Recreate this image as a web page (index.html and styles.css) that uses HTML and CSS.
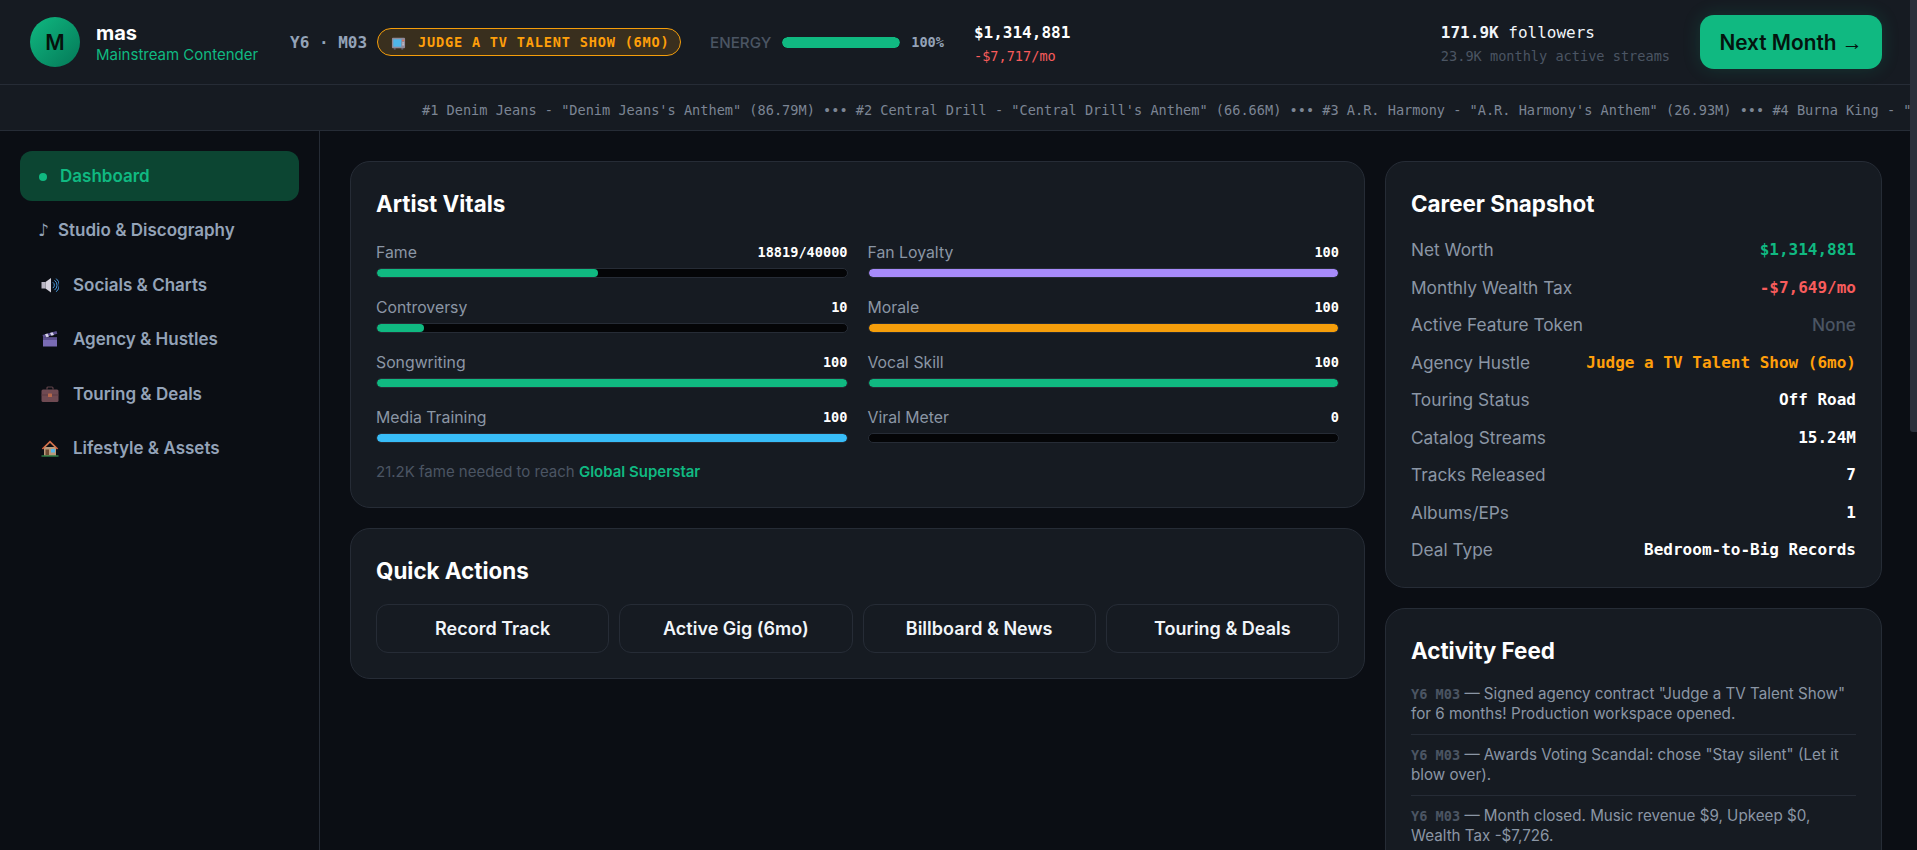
FILE: index.html
```html
<!DOCTYPE html>
<html lang="en">
<head>
<meta charset="utf-8">
<title>mas - Dashboard</title>
<link rel="stylesheet" href="styles.css">
</head>
<body>
<div class="shell">
  <header class="topbar">
    <div class="avatar">M</div>
    <div class="identity">
      <div class="name">mas</div>
      <div class="rank">Mainstream Contender</div>
    </div>
    <div class="date">Y6 · M03</div>
    <div class="gig-badge">
      <svg class="gig-icon" viewBox="0 0 16 16" aria-hidden="true"><rect x="1" y="3" width="14" height="11" rx="1" fill="#8f8a99"/><rect x="2.5" y="4.5" width="8.5" height="8" fill="#4fb6e8"/><rect x="12" y="5" width="2" height="1.5" fill="#e0705a"/><rect x="12" y="8" width="2" height="1" fill="#d9d4de"/><rect x="12" y="10" width="2" height="1" fill="#d9d4de"/><rect x="3" y="14" width="2" height="1.5" fill="#6b6675"/><rect x="11" y="14" width="2" height="1.5" fill="#6b6675"/></svg>
      JUDGE A TV TALENT SHOW (6MO)
    </div>
    <div class="energy">
      <span class="energy-label">ENERGY</span>
      <span class="energy-track"><span class="energy-fill"></span></span>
      <span class="energy-pct">100%</span>
    </div>
    <div class="money">
      <div class="money-val">$1,314,881</div>
      <div class="money-rate">-$7,717/mo</div>
    </div>
    <div class="reach">
      <div class="followers"><b>171.9K</b> followers</div>
      <div class="streams">23.9K monthly active streams</div>
    </div>
    <button class="next-btn">Next Month <span class="arrow">→</span></button>
  </header>
  <div class="ticker"><div class="ticker-text">#1 Denim Jeans - "Denim Jeans's Anthem" (86.79M) ••• #2 Central Drill - "Central Drill's Anthem" (66.66M) ••• #3 A.R. Harmony - "A.R. Harmony's Anthem" (26.93M) ••• #4 Burna King - "Burna King's Anthem" (21.40M)</div></div>
  <div class="layout">
    <nav class="sidebar">
      <a class="nav-item active"><span class="nav-dot"></span>Dashboard</a>
      <a class="nav-item"><span class="nav-glyph">♪</span>Studio &amp; Discography</a>
      <a class="nav-item">
        <svg class="nav-icon" viewBox="0 0 18 18" aria-hidden="true"><rect x="0.5" y="6" width="4" height="6.5" fill="#b9b6c4"/><path d="M4.5 6 10 2v14.5L4.5 12.500z" fill="#d6d3de"/><path d="M11.800 6.300a3.500 3.500 0 0 1 0 5.800M13.500 4.300a6 6 0 0 1 0 9.800M15.200 2.600a8.500 8.500 0 0 1 0 13.200" fill="none" stroke="#4a9be0" stroke-width="1"/></svg>
        Socials &amp; Charts
      </a>
      <a class="nav-item">
        <svg class="nav-icon" viewBox="0 0 18 18" aria-hidden="true"><rect x="2" y="7.500" width="14" height="9" fill="#7a6cb5"/><rect x="2" y="7.500" width="14" height="2.500" fill="#5c4f8f"/><path d="M1.500 5 15.500 1l.8 2.800-14 4z" fill="#5c4f8f"/><path d="M4 4.300 6.500 3.600 8 6.500 5.500 7.200zM9 2.900 11.500 2.200 13 5.100 10.500 5.800z" fill="#d8d4ea"/></svg>
        Agency &amp; Hustles
      </a>
      <a class="nav-item">
        <svg class="nav-icon" viewBox="0 0 18 18" aria-hidden="true"><path d="M6 4.500V3a1 1 0 0 1 1-1h4a1 1 0 0 1 1 1v1.500" fill="none" stroke="#5f4248" stroke-width="1.200"/><rect x="0.500" y="4.500" width="17" height="12.500" rx="1.500" fill="#6f4a52"/><rect x="0.500" y="9.500" width="17" height="1" fill="#5a3b42"/><rect x="7" y="8.500" width="4" height="3.500" rx="0.500" fill="#b5684a"/></svg>
        Touring &amp; Deals
      </a>
      <a class="nav-item">
        <svg class="nav-icon" viewBox="0 0 18 18" aria-hidden="true"><rect x="3" y="8" width="12" height="8.500" fill="#b99a7c"/><path d="M9 1.500 0.800 9.500l1.200 1L9 3.800l7 6.700 1.200-1z" fill="#d9603f"/><path d="M9 3.800 3 9.500V8l6-5.500 6 5.500v1.500z" fill="#c97c52"/><rect x="4.500" y="10.500" width="3.500" height="6" fill="#6e4a34"/><rect x="10" y="10" width="4" height="3.500" fill="#55b6e8"/><rect x="0.500" y="16.500" width="17" height="1" fill="#3fae5a"/></svg>
        Lifestyle &amp; Assets
      </a>
    </nav>
    <main class="main">
      <div class="col">
        <section class="card">
          <h2 class="card-title">Artist Vitals</h2>
          <div class="vitals">
            <div class="vital"><div class="vital-head"><span>Fame</span><b>18819/40000</b></div><div class="bar"><div class="fill green" style="width:47.05%"></div></div></div>
            <div class="vital"><div class="vital-head"><span>Fan Loyalty</span><b>100</b></div><div class="bar"><div class="fill purple" style="width:100%"></div></div></div>
            <div class="vital"><div class="vital-head"><span>Controversy</span><b>10</b></div><div class="bar"><div class="fill green" style="width:10%"></div></div></div>
            <div class="vital"><div class="vital-head"><span>Morale</span><b>100</b></div><div class="bar"><div class="fill amber" style="width:100%"></div></div></div>
            <div class="vital"><div class="vital-head"><span>Songwriting</span><b>100</b></div><div class="bar"><div class="fill green" style="width:100%"></div></div></div>
            <div class="vital"><div class="vital-head"><span>Vocal Skill</span><b>100</b></div><div class="bar"><div class="fill green" style="width:100%"></div></div></div>
            <div class="vital"><div class="vital-head"><span>Media Training</span><b>100</b></div><div class="bar"><div class="fill blue" style="width:100%"></div></div></div>
            <div class="vital"><div class="vital-head"><span>Viral Meter</span><b>0</b></div><div class="bar"><div class="fill green" style="width:0%"></div></div></div>
          </div>
          <p class="fame-note">21.2K fame needed to reach <b>Global Superstar</b></p>
        </section>
        <section class="card">
          <h2 class="card-title">Quick Actions</h2>
          <div class="actions">
            <button class="action">Record Track</button>
            <button class="action">Active Gig (6mo)</button>
            <button class="action">Billboard &amp; News</button>
            <button class="action">Touring &amp; Deals</button>
          </div>
        </section>
      </div>
      <div class="col">
        <section class="card snapshot">
          <h2 class="card-title">Career Snapshot</h2>
          <div class="stat"><span>Net Worth</span><b class="c-green">$1,314,881</b></div>
          <div class="stat"><span>Monthly Wealth Tax</span><b class="c-red">-$7,649/mo</b></div>
          <div class="stat"><span>Active Feature Token</span><em class="c-none">None</em></div>
          <div class="stat"><span>Agency Hustle</span><b class="c-amber">Judge a TV Talent Show (6mo)</b></div>
          <div class="stat"><span>Touring Status</span><b>Off Road</b></div>
          <div class="stat"><span>Catalog Streams</span><b>15.24M</b></div>
          <div class="stat"><span>Tracks Released</span><b>7</b></div>
          <div class="stat"><span>Albums/EPs</span><b>1</b></div>
          <div class="stat"><span>Deal Type</span><b>Bedroom-to-Big Records</b></div>
        </section>
        <section class="card feed">
          <h2 class="card-title">Activity Feed</h2>
          <div class="feed-item"><span class="stamp">Y6 M03</span> — Signed agency contract "Judge a TV Talent Show" for 6 months! Production workspace opened.</div>
          <div class="feed-item"><span class="stamp">Y6 M03</span> — Awards Voting Scandal: chose "Stay silent" (Let it blow over).</div>
          <div class="feed-item"><span class="stamp">Y6 M03</span> — Month closed. Music revenue $9, Upkeep $0, Wealth Tax -$7,726.</div>
        </section>
      </div>
    </main>
  </div>
</div>
<div class="rail"><div class="rail-thumb"></div></div>
</body>
</html>
```
FILE: styles.css
```css
* { box-sizing: border-box; }
html, body { margin: 0; height: 100%; overflow: hidden; }
body { display: flex; background: #0b0e14; color: #f1f5f9; font-family: Inter, "Noto Sans", sans-serif; }

.shell { flex: 1; min-width: 0; height: 100vh; overflow: hidden; }
.rail { flex: none; width: 7px; height: 100vh; background: #0b0e14; }
.rail-thumb { height: 432px; background: #2a303b; border-radius: 0 0 0 3px; }

/* Top bar */
.topbar { height: 85px; display: flex; align-items: center; padding: 0 28px 0 30px; background: #161b22; border-bottom: 1px solid #262c36; }
.avatar { flex: none; width: 50px; height: 50px; border-radius: 50%; display: flex; align-items: center; justify-content: center; background: linear-gradient(135deg, #10b981, #047857); color: #06120d; font-size: 21px; font-weight: 600; }
.identity { margin-left: 16px; width: 194px; padding-top: 2px; }
.name { font-size: 20px; font-weight: 700; line-height: 24px; color: #fff; }
.rank { font-size: 15px; line-height: 20px; color: #10b981; }
.date { font-family: "DejaVu Sans Mono", monospace; font-size: 16px; font-weight: 700; color: #94a3b8; width: 87px; white-space: nowrap; }
.gig-badge { flex: none; width: 304px; height: 28px; padding-left: 13px; display: flex; align-items: center; border: 1px solid #f59e0b; border-radius: 14px; background: rgba(245, 158, 11, 0.16); color: #ff9f0a; font-family: "DejaVu Sans Mono", monospace; font-size: 13.6px; font-weight: 700; letter-spacing: 0.8px; white-space: nowrap; }
.gig-icon { flex: none; width: 15px; height: 15px; margin-right: 12px; }
.energy { margin-left: 29px; display: flex; align-items: center; }
.energy-label { font-size: 15.2px; font-weight: 500; color: #4b5563; }
.energy-track { margin-left: 11px; width: 118px; height: 11px; border-radius: 6px; background: #050608; overflow: hidden; }
.energy-fill { display: block; height: 100%; background: #10b981; border-radius: 6px; }
.energy-pct { margin-left: 11px; font-family: "DejaVu Sans Mono", monospace; font-size: 13.6px; font-weight: 700; color: #94a3b8; }
.money { margin-left: 30px; padding-top: 4px; font-family: "DejaVu Sans Mono", monospace; }
.money-val { font-size: 16px; font-weight: 700; line-height: 22px; color: #fff; }
.money-rate { font-size: 13.6px; line-height: 20px; margin-top: 2px; color: #f85c5c; }
.reach { margin-left: auto; padding-top: 4px; font-family: "DejaVu Sans Mono", monospace; }
.followers { font-size: 16px; line-height: 22px; color: #f1f5f9; }
.streams { font-size: 13.6px; line-height: 20px; margin-top: 2px; color: #4b5563; }
.next-btn { flex: none; margin-left: 30px; width: 182px; height: 54px; border: 0; border-radius: 14px; background: #10b981; color: #04140e; font-family: Inter, sans-serif; font-size: 20.8px; font-weight: 600; box-shadow: 0 0 18px rgba(16, 185, 129, 0.18); }
.arrow { font-family: "Liberation Sans", sans-serif; font-weight: 400; }

/* Ticker */
.ticker { height: 46px; display: flex; align-items: center; overflow: hidden; padding: 4px 0 0 422px; background: #161b22; border-bottom: 1px solid #262c36; }
.ticker-text { font-family: "DejaVu Sans Mono", monospace; font-size: 13.6px; white-space: nowrap; color: #7c8594; }

/* Layout */
.layout { display: grid; grid-template-columns: 320px 1fr; height: calc(100vh - 131px); }
.sidebar { padding: 20px; display: flex; flex-direction: column; gap: 4.4px; border-right: 1px solid #262c36; }
.nav-item { height: 50px; display: flex; align-items: center; padding-left: 18px; border-radius: 12px; font-size: 17px; font-weight: 600; color: #94a3b8; white-space: nowrap; }
.nav-item.active { color: #10b981; background: #0c4532; }
.nav-dot { flex: none; width: 8px; height: 8px; margin: 2px 13px 0 1px; border-radius: 50%; background: #10b981; }
.nav-glyph { flex: none; width: 20px; font-family: "DejaVu Sans", sans-serif; font-size: 17px; }
.nav-icon { flex: none; width: 18px; height: 18px; margin: 0 14px 0 3px; }

.main { padding: 30px 28px 0 30px; display: grid; grid-template-columns: 1015px 497px; gap: 20px; align-items: start; overflow: hidden; }
.col { display: flex; flex-direction: column; gap: 20px; }
.card { padding: 25px; background: #161b22; border: 1px solid #262c36; border-radius: 20px; }
.card-title { margin: 0 0 16px; font-size: 22.4px; line-height: 34px; font-weight: 700; color: #fff; }

/* Vitals */
.vitals { display: grid; grid-template-columns: 1fr 1fr; column-gap: 20px; row-gap: 17px; padding-top: 3px; }
.vital-head { display: flex; justify-content: space-between; align-items: center; height: 24px; margin-bottom: 4px; font-size: 15.8px; color: #8b96a5; }
.vital-head b { font-family: "DejaVu Sans Mono", monospace; font-size: 13.6px; color: #fff; }
.bar { height: 10px; border: 1px solid #262c36; border-radius: 6px; background: #040507; overflow: hidden; }
.fill { height: 100%; border-radius: 5px; }
.green { background: #10b981; }
.purple { background: #a78bfa; }
.amber { background: #f59e0b; }
.blue { background: #38bdf8; }
.fame-note { margin: 19px 0 0; font-size: 15px; line-height: 20px; color: #4b5563; }
.fame-note b { color: #10b981; font-weight: 600; }

/* Quick actions */
.actions { display: grid; grid-template-columns: repeat(4, 1fr); gap: 10px; }
.action { height: 49px; background: transparent; border: 1px solid #262c36; border-radius: 12px; color: #f1f5f9; font-family: Inter, sans-serif; font-size: 18px; font-weight: 600; }

/* Snapshot */
.snapshot { padding-bottom: 18px; }
.snapshot .card-title { margin-bottom: 10px; }
.stat { display: flex; justify-content: space-between; align-items: center; height: 37.5px; font-size: 17.3px; color: #8b96a5; }
.stat b { font-family: "DejaVu Sans Mono", monospace; font-size: 16px; color: #fff; }
.stat em { font-style: normal; font-size: 17.3px; font-weight: 500; }
.c-green { color: #10b981 !important; }
.c-red { color: #f85c5c !important; }
.c-amber { color: #ff9f0a !important; }
.c-none { color: #4b5563; }

/* Feed */
.feed .card-title { margin-bottom: 6px; }
.feed-item { padding: 10px 0; border-bottom: 1px solid #262c36; font-size: 15.2px; line-height: 20px; color: #8b96a5; }
.stamp { font-family: "DejaVu Sans Mono", monospace; font-size: 13.6px; font-weight: 700; color: #4b5563; }
```
